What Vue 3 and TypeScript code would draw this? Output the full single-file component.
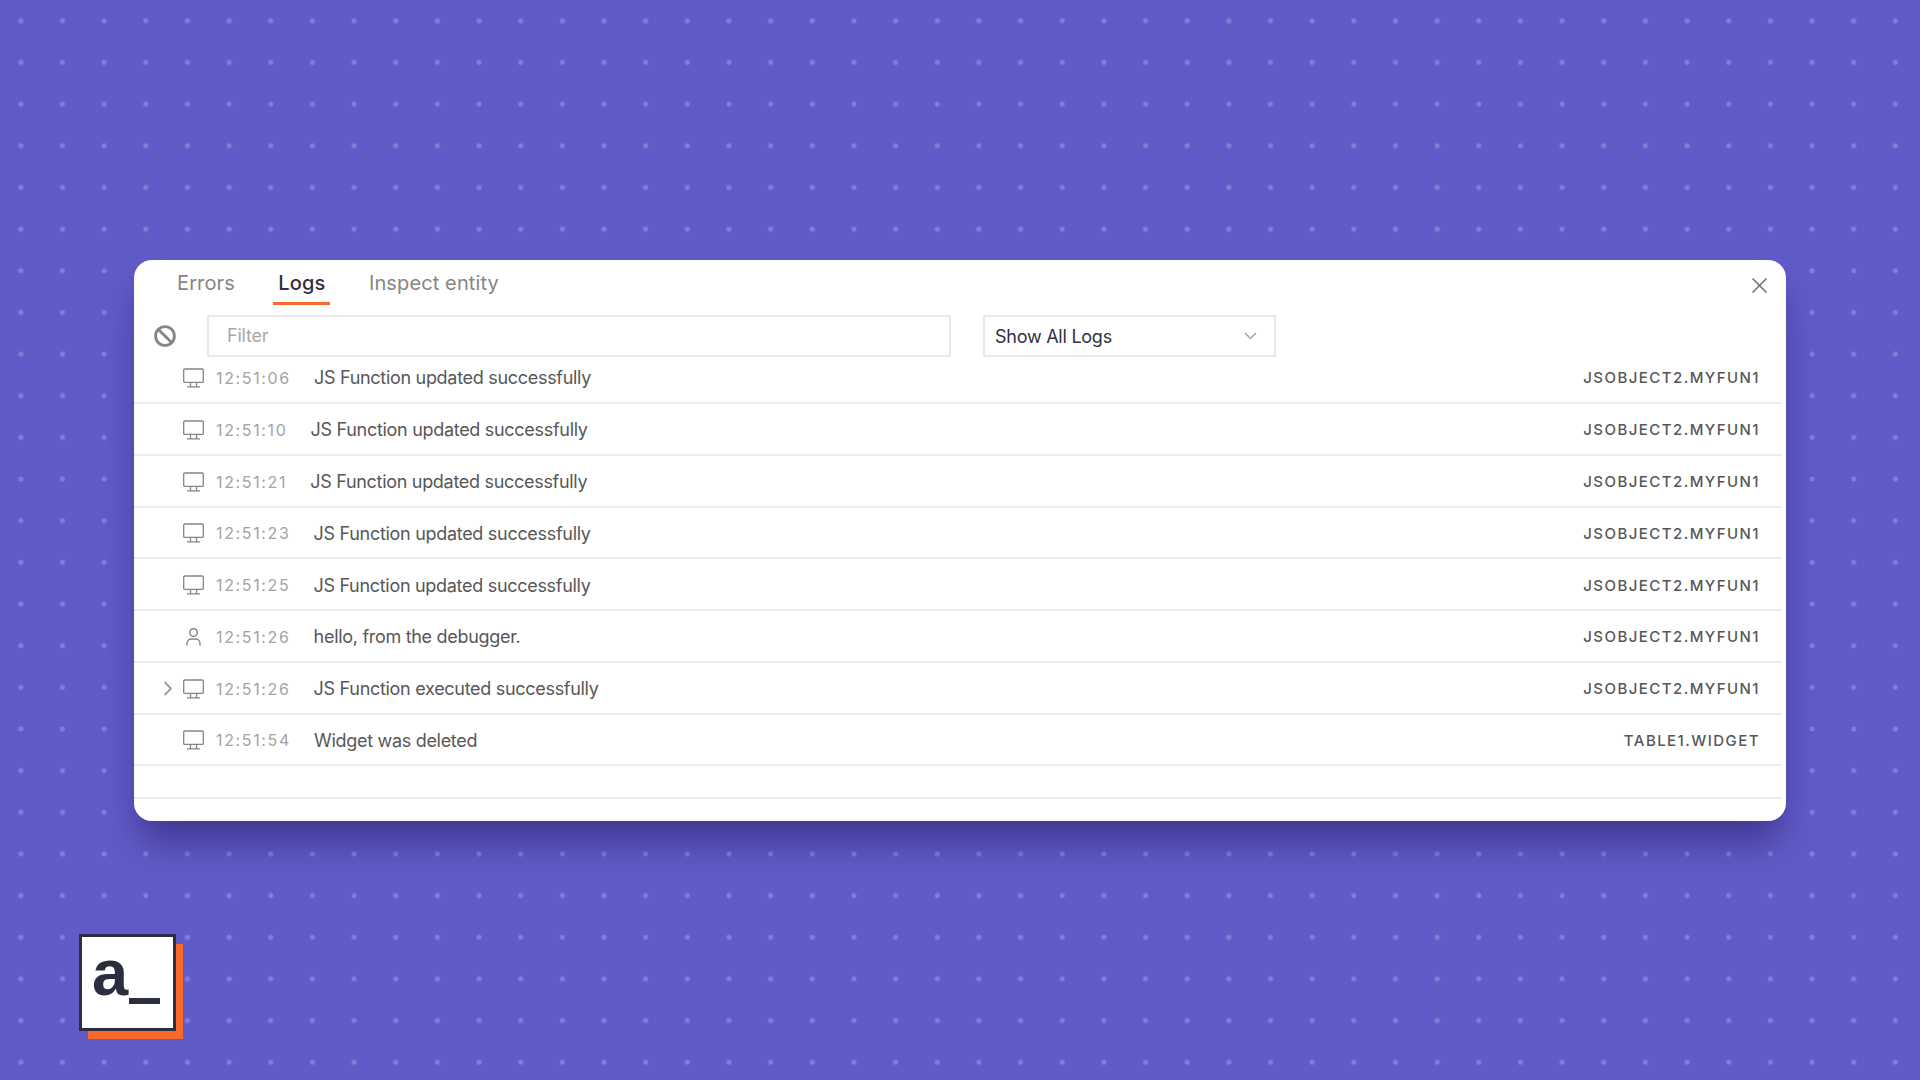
<script setup lang="ts">
interface LogRow {
  icon: 'system' | 'user'
  time: string
  message: string
  source: string
  expandable?: boolean
}

const rows: LogRow[] = [
  { icon: 'system', time: '12:51:06', message: 'JS Function updated successfully', source: 'JSOBJECT2.MYFUN1' },
  { icon: 'system', time: '12:51:10', message: 'JS Function updated successfully', source: 'JSOBJECT2.MYFUN1' },
  { icon: 'system', time: '12:51:21', message: 'JS Function updated successfully', source: 'JSOBJECT2.MYFUN1' },
  { icon: 'system', time: '12:51:23', message: 'JS Function updated successfully', source: 'JSOBJECT2.MYFUN1' },
  { icon: 'system', time: '12:51:25', message: 'JS Function updated successfully', source: 'JSOBJECT2.MYFUN1' },
  { icon: 'user', time: '12:51:26', message: 'hello, from the debugger.', source: 'JSOBJECT2.MYFUN1' },
  { icon: 'system', time: '12:51:26', message: 'JS Function executed successfully', source: 'JSOBJECT2.MYFUN1', expandable: true },
  { icon: 'system', time: '12:51:54', message: 'Widget was deleted', source: 'TABLE1.WIDGET' },
]
const tabs = ['Errors', 'Logs', 'Inspect entity']
</script>

<template>
  <div class="page">
    <section class="panel">
      <header class="tabs">
        <div v-for="t in tabs" :key="t" class="tab" :class="{ active: t === 'Logs' }">{{ t }}</div>
        <svg class="close" width="15" height="15" viewBox="0 0 15 15" fill="none" stroke="#6a6a6a" stroke-width="1.5">
          <path d="M0.5 0.5 14.5 14.5M14.5 0.5 0.5 14.5" />
        </svg>
      </header>
      <div class="toolbar">
        <svg class="ban" width="22" height="22" viewBox="0 0 22 22" fill="none" stroke="#858585" stroke-width="2.8">
          <circle cx="11" cy="11" r="9.4" />
          <path d="M4.4 4.4 17.6 17.6" />
        </svg>
        <div class="filter">Filter</div>
        <div class="select">
          <span>Show All Logs</span>
          <svg width="13" height="8" viewBox="0 0 13 8" fill="none" stroke="#a3a3a3" stroke-width="1.5">
            <path d="M1 1 6.5 6.5 12 1" />
          </svg>
        </div>
      </div>
      <div class="rows">
        <div v-for="(r, i) in rows" :key="i" class="row">
          <div class="caret">
            <svg v-if="r.expandable" width="10" height="15" viewBox="0 0 10 15" fill="none" stroke="#9a9a9a" stroke-width="1.8">
              <path d="M1.5 1 8 7.5 1.5 14" />
            </svg>
          </div>
          <svg v-if="r.icon === 'system'" class="icon" width="21" height="20" viewBox="0 0 21 20" fill="none" stroke="#858585" stroke-width="1.3">
            <rect x="0.7" y="1" width="19.6" height="13.4" rx="1" />
            <path d="M7.5 14.5V18.6M13.5 14.5V18.6M4 18.8H17" />
          </svg>
          <svg v-else class="icon" width="21" height="20" viewBox="0 0 21 20" fill="none" stroke="#858585" stroke-width="1.4">
            <circle cx="10.5" cy="5.5" r="3.8" />
            <path d="M4 18.5V16.5C4 13.8 6 12 8.5 12H12.5C15 12 17 13.8 17 16.5V18.5" />
          </svg>
          <span class="time">{{ r.time }}</span>
          <span class="message">{{ r.message }}</span>
          <span class="source">{{ r.source }}</span>
        </div>
        <div class="row blank"></div>
      </div>
    </section>
    <div class="logo-wrap">
      <div class="logo"><span class="logo-a">a</span><span class="logo-bar"></span></div>
    </div>
  </div>
</template>

<style>
html, body { margin: 0; padding: 0; }
</style>

<style scoped>
.page {
  width: 1920px;
  height: 1080px;
  overflow: hidden;
  box-sizing: border-box;
  padding-top: 260px;
  background-color: #605bc8;
  background-image: radial-gradient(circle at center, #837ed5 0, #837ed5 2px, transparent 3.1px);
  background-size: 41.667px 41.667px;
  font-family: Inter, "Liberation Sans", sans-serif;
}
.panel {
  margin-left: 134px;
  width: 1652px;
  height: 561px;
  box-sizing: border-box;
  padding-right: 4px;
  background: #fff;
  border-radius: 18px;
  box-shadow: 0 26px 36px -6px rgba(25, 15, 80, 0.47);
}
.tabs {
  display: flex;
  align-items: flex-start;
  gap: 33.5px;
  height: 55px;
  box-sizing: border-box;
  padding-left: 38px;
  position: relative;
}
.tab {
  padding: 9px 5px 0;
  height: 45px;
  box-sizing: border-box;
  font-size: 20px;
  line-height: 28px;
  letter-spacing: 0.12px;
  color: #858585;
}
.tab.active {
  color: #2f3141;
  border-bottom: 3px solid #f86a2b;
  font-weight: 500;
}
.close {
  position: absolute;
  right: 15px;
  top: 18px;
}
.toolbar {
  display: flex;
  align-items: center;
  height: 42px;
  padding-left: 20px;
}
.ban { margin-right: 31px; }
.filter {
  width: 744px;
  height: 42px;
  box-sizing: border-box;
  border: 2px solid #e8e8e8;
  padding-left: 18px;
  font-size: 18px;
  line-height: 38px;
  color: #a9a7a7;
  letter-spacing: -0.2px;
}
.select {
  margin-left: 32px;
  width: 293px;
  height: 42px;
  box-sizing: border-box;
  border: 2px solid #e8e8e8;
  padding: 0 17px 0 10px;
  display: flex;
  align-items: center;
  justify-content: space-between;
  font-size: 18px;
  color: #2f3141;
  letter-spacing: -0.25px;
}
.rows { display: flex; flex-direction: column; }
.row {
  display: flex;
  align-items: center;
  height: 51.75px;
  box-sizing: border-box;
  padding-top: 2px;
  border-bottom: 2px solid #ededed;
}
.row:first-child { height: 47px; padding-top: 0; padding-bottom: 4px; }
.row.blank { height: 33px; }
.caret {
  width: 49px;
  box-sizing: border-box;
  padding-left: 29px;
  display: flex;
  align-items: center;
}
.icon { flex: none; }
.time {
  margin-left: 12px;
  font-size: 16px;
  letter-spacing: 1.65px;
  color: #a3a3a3;
}
.message {
  margin-left: 23px;
  font-size: 18px;
  letter-spacing: -0.3px;
  color: #575757;
}
.source {
  margin-left: auto;
  padding-right: 22px;
  font-size: 15px;
  font-weight: 500;
  letter-spacing: 1.45px;
  color: #575757;
}
.logo-wrap {
  margin-top: 113px;
  margin-left: 79px;
}
.logo {
  position: relative;
  width: 97px;
  height: 97px;
  box-sizing: border-box;
  border: 3px solid #2b2e3e;
  background: #fff;
  box-shadow: 8px 9px 0 -1px #f86a2b;
}
.logo-a {
  position: absolute;
  left: 10px;
  top: 0;
  font-family: "Liberation Sans", sans-serif;
  font-weight: 700;
  font-size: 65px;
  line-height: 72px;
  color: #2b2e3e;
}
.logo-bar {
  position: absolute;
  left: 47px;
  top: 61px;
  width: 31px;
  height: 6px;
  background: #2b2e3e;
}
</style>
